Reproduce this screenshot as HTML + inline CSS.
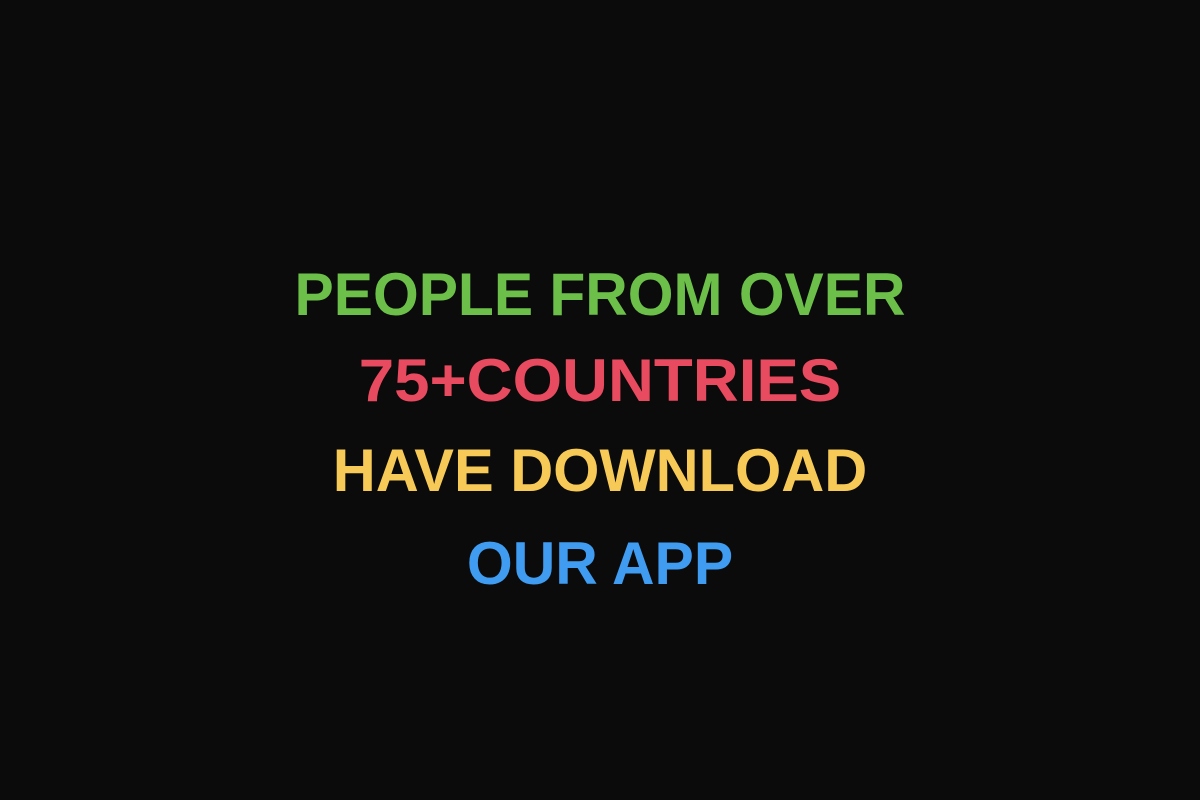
<!DOCTYPE html>
<html><head><meta charset="utf-8"><style>
html,body{margin:0;padding:0;}
body{width:1200px;height:800px;background:#0b0b0b;position:relative;overflow:hidden;font-family:"Liberation Sans",sans-serif;font-weight:bold;}
.l{position:absolute;left:0;width:1200px;text-align:center;font-size:60px;line-height:60px;white-space:nowrap;transform-origin:600px 50%;}
</style></head><body>
<div class="l" style="top:265px;color:#6cc04a;transform:scaleX(0.98)">PEOPLE FROM OVER</div>
<div class="l" style="top:351px;color:#e84a5f;transform:scaleX(1.06)">75+COUNTRIES</div>
<div class="l" style="top:441px;color:#f7c957;transform:scaleX(0.992)">HAVE DOWNLOAD</div>
<div class="l" style="top:534px;color:#3f9cf0;transform:scaleX(0.982)">OUR APP</div>
</body></html>
